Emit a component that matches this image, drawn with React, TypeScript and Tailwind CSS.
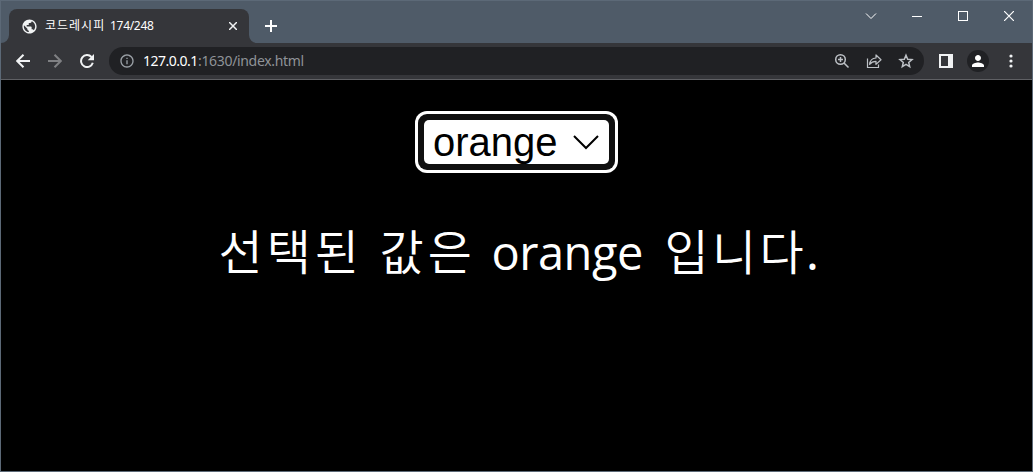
import type { ReactNode } from 'react'
import { MdInfoOutline, MdPerson, MdPublic } from 'react-icons/md'

function WindowControls() {
  return (
    <div className="flex h-[30px] text-white">
      <div className="flex w-[46px] items-center justify-center">
        <svg width="12" height="8" viewBox="0 0 12 8" fill="none" stroke="currentColor">
          <path d="M1 1.5 6 6.5 11 1.5" />
        </svg>
      </div>
      <div className="flex w-[46px] items-center justify-center">
        <div className="h-px w-[10px] bg-white" />
      </div>
      <div className="flex w-[46px] items-center justify-center">
        <div className="size-[10px] border border-white" />
      </div>
      <div className="flex w-[46px] items-center justify-center">
        <svg width="10" height="10" viewBox="0 0 10 10" stroke="currentColor" strokeWidth="1.2">
          <path d="M0 0 10 10M10 0 0 10" />
        </svg>
      </div>
    </div>
  )
}

function TabStrip() {
  return (
    <div className="flex h-[42px] items-start justify-between bg-[#4f5b68]">
      <div className="flex pt-2">
        <svg className="mt-[26px]" width="8" height="8" viewBox="0 0 8 8" fill="#35363a">
          <path d="M8 0v8H0a8 8 0 0 0 8-8" />
        </svg>
        <div className="flex h-[34px] w-[240px] items-center rounded-t-lg bg-[#35363a] pl-3 text-white">
          <MdPublic className="size-[17px] text-[#f1f3f4]" />
          <span className="ml-[7px] w-[65px] text-[12px] tracking-[1px] whitespace-nowrap">코드레시피</span>
          <span className="text-[12px] tracking-[-0.3px]">174/248</span>
          <svg className="mr-[12px] mb-px ml-auto" width="8" height="8" viewBox="0 0 8 8" stroke="#f1f3f4" strokeWidth="1.5">
            <path d="M0 0 8 8M8 0 0 8" />
          </svg>
        </div>
        <svg className="mt-[26px]" width="8" height="8" viewBox="0 0 8 8" fill="#35363a">
          <path d="M0 0v8h8a8 8 0 0 1-8-8" />
        </svg>
        <svg className="mt-[11px] ml-[8px]" width="12" height="12" viewBox="0 0 12 12" stroke="#fff" strokeWidth="2">
          <path d="M6 0v12M0 6h12" />
        </svg>
      </div>
      <WindowControls />
    </div>
  )
}

function AddressBar() {
  return (
    <div className="flex h-7 w-[815px] items-center rounded-full bg-[#202124] pr-[10px] pl-[10px] text-[#9aa0a6]">
      <MdInfoOutline className="size-4" />
      <span className="mb-px ml-2 w-[55px] text-[14px] tracking-[-0.5px] whitespace-nowrap text-white">127.0.0.1</span>
      <span className="mb-px text-[14px] tracking-[-0.33px] whitespace-nowrap text-[#8f9398]">:1630/index.html</span>
      <div className="ml-auto flex items-center gap-4 text-[#bdc1c6]">
        <svg width="16" height="16" viewBox="0 0 16 16" fill="none" stroke="currentColor" strokeWidth="1.5">
          <circle cx="6.5" cy="6.5" r="4.8" />
          <path d="m10 10 4.5 4.5M6.5 4v5M4 6.5h5" />
        </svg>
        <svg width="16" height="16" viewBox="0 0 16 16" fill="none" stroke="currentColor" strokeWidth="1.2">
          <path d="M1.5 5.5v9h11v-3" />
          <path d="M10 2v3C6.3 5.2 4 7.4 3.6 11.4 5.2 9.3 7.2 8.4 10 8.4v3l5-4.7Z" strokeLinejoin="round" />
        </svg>
        <svg width="16" height="16" viewBox="0 0 16 16" fill="none" stroke="currentColor" strokeWidth="1.5">
          <path d="m8 2.2 1.7 4 4.3.4-3.3 2.8 1 4.2L8 11.4l-3.7 2.2 1-4.2L2 6.6l4.3-.4Z" />
        </svg>
      </div>
    </div>
  )
}

function Toolbar() {
  return (
    <div className="flex h-[37px] items-center border-b border-[#5f6064] bg-[#35363a] pl-[15px] text-[#f1f3f4]">
      <svg width="14" height="14" viewBox="0 0 14 14" fill="none" stroke="currentColor" strokeWidth="2">
        <path d="M14 7H1.5M7.5 .7 1.2 7l6.3 6.3" />
      </svg>
      <svg className="ml-[18px] text-[#7f8083]" width="14" height="14" viewBox="0 0 14 14" fill="none" stroke="currentColor" strokeWidth="2">
        <path d="M0 7h12.5M6.5 .7 12.8 7l-6.3 6.3" />
      </svg>
      <svg className="mr-[15px] ml-[18px]" width="14" height="14" viewBox="0 0 14 14" fill="none" stroke="currentColor" strokeWidth="2">
        <path d="M11.5 3A6 6 0 1 0 12.8 8.8" />
        <path d="M14 0v6.3H7.7Z" fill="currentColor" stroke="none" />
      </svg>
      <AddressBar />
      <div className="ml-[15px] h-[14px] w-[14px] border-2 border-r-[5px] border-[#f1f3f4]" />
      <div className="ml-[14px] flex size-[22px] items-center justify-center rounded-full bg-[#202124]">
        <MdPerson className="size-[18px] text-white" />
      </div>
      <svg className="ml-[20px]" width="4" height="14" viewBox="0 0 4 14" fill="currentColor">
        <circle cx="2" cy="2" r="1.6" />
        <circle cx="2" cy="7" r="1.6" />
        <circle cx="2" cy="12" r="1.6" />
      </svg>
    </div>
  )
}

function BrowserWindow({ children }: { children: ReactNode }) {
  return (
    <div className="flex h-[472px] w-[1033px] flex-col overflow-hidden border border-[#5c6977] bg-black font-['Noto_Sans','Noto_Sans_CJK_KR',sans-serif]">
      <TabStrip />
      <Toolbar />
      {children}
    </div>
  )
}

export default function App() {
  return (
    <BrowserWindow>
      <main className="flex min-h-0 flex-1 flex-col items-center pt-[31px] text-white">
        <div className="h-[62px] w-[203px] rounded-[12px] bg-white p-[3px]">
          <div className="h-full rounded-[9px] bg-[#101010] p-[6px]">
            <button className="flex h-full w-full items-center rounded-[5px] bg-white pr-[10px] pl-[9px] font-['Liberation_Sans',Arial,sans-serif] text-[40px] leading-[44px] text-black">
              orange
              <svg className="ml-auto" width="26" height="16" viewBox="0 0 26 16" fill="none" stroke="currentColor" strokeWidth="2">
                <path d="M1 2 13 14 25 2" />
              </svg>
            </button>
          </div>
        </div>
        <p className="mt-[44px] flex w-[598px] text-[48px] leading-[70px] whitespace-nowrap">
          <span className="w-[162px] shrink-0 pl-px font-[350] tracking-[4px]">선택된</span>
          <span className="w-[112px] shrink-0 font-[350] tracking-[4px]">값은</span>
          <span className="w-[173px] shrink-0 font-['Open_Sans','Noto_Sans',sans-serif] text-[47px] font-[370] tracking-[-0.5px]">orange</span>
          <span className="shrink-0 font-[350] tracking-[3.3px]">입니다</span>
          <span className="-ml-px shrink-0">.</span>
        </p>
      </main>
    </BrowserWindow>
  )
}
